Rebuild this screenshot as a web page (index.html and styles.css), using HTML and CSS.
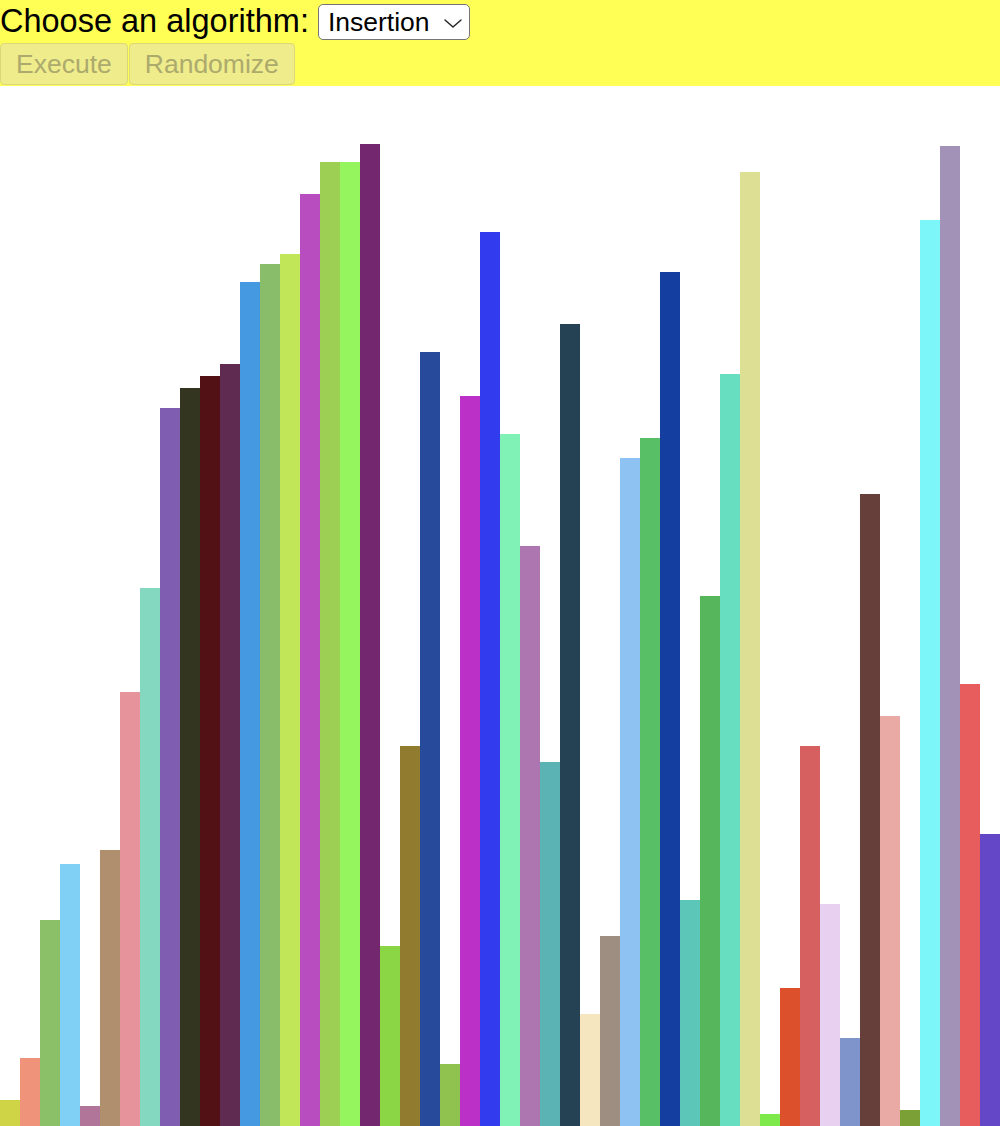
FILE: index.html
```html
<!DOCTYPE html>
<html>
<head>
    <title>Sorting visualizer</title>
    <meta charset="UTF-8"/>
    <link rel="stylesheet" href="styles.css">
</head>
<body>
    <div class="controls">
        <div class="row">
            <label for="algorithm">Choose an algorithm:</label>
            <span class="select-wrap">
                <select id="algorithm">
                    <option>Insertion</option>
                    <option>Bubble</option>
                    <option>Selection</option>
                    <option>Merge</option>
                    <option>Quick</option>
                </select>
                <svg class="chevron" width="18" height="9" viewBox="0 0 18 9">
                    <path d="M1 1 L9 8 L17 1" fill="none" stroke="#222" stroke-width="1.4" stroke-linecap="round" stroke-linejoin="round"/>
                </svg>
            </span>
        </div>
        <div class="row">
            <button id="execute" disabled>Execute</button>
            <button id="randomize" disabled>Randomize</button>
        </div>
    </div>
    <div class="bars">
        <div class="bar" style="height: 26px; background: #cfd447"></div>
        <div class="bar" style="height: 68px; background: #ef947a"></div>
        <div class="bar" style="height: 206px; background: #8bbf68"></div>
        <div class="bar" style="height: 262px; background: #80cff5"></div>
        <div class="bar" style="height: 20px; background: #b07598"></div>
        <div class="bar" style="height: 276px; background: #b08f6f"></div>
        <div class="bar" style="height: 434px; background: #e6939c"></div>
        <div class="bar" style="height: 538px; background: #85d8c0"></div>
        <div class="bar" style="height: 718px; background: #7f5db0"></div>
        <div class="bar" style="height: 738px; background: #333520"></div>
        <div class="bar" style="height: 750px; background: #521215"></div>
        <div class="bar" style="height: 762px; background: #602b50"></div>
        <div class="bar" style="height: 844px; background: #4499e0"></div>
        <div class="bar" style="height: 862px; background: #8abd6a"></div>
        <div class="bar" style="height: 872px; background: #c1e657"></div>
        <div class="bar" style="height: 932px; background: #b84dc0"></div>
        <div class="bar" style="height: 964px; background: #9dcf54"></div>
        <div class="bar" style="height: 964px; background: #94f55f"></div>
        <div class="bar" style="height: 982px; background: #73276e"></div>
        <div class="bar" style="height: 180px; background: #8ad645"></div>
        <div class="bar" style="height: 380px; background: #917b2f"></div>
        <div class="bar" style="height: 774px; background: #284a9a"></div>
        <div class="bar" style="height: 62px; background: #8fc24f"></div>
        <div class="bar" style="height: 730px; background: #bb30c6"></div>
        <div class="bar" style="height: 894px; background: #333bee"></div>
        <div class="bar" style="height: 692px; background: #80f2b6"></div>
        <div class="bar" style="height: 580px; background: #ad76b1"></div>
        <div class="bar" style="height: 364px; background: #5cb3b3"></div>
        <div class="bar" style="height: 802px; background: #254255"></div>
        <div class="bar" style="height: 112px; background: #f5e6c0"></div>
        <div class="bar" style="height: 190px; background: #9e8d81"></div>
        <div class="bar" style="height: 668px; background: #8ec2f3"></div>
        <div class="bar" style="height: 688px; background: #58bf67"></div>
        <div class="bar" style="height: 854px; background: #143fa0"></div>
        <div class="bar" style="height: 226px; background: #5cc6b9"></div>
        <div class="bar" style="height: 530px; background: #55b65c"></div>
        <div class="bar" style="height: 752px; background: #68dec0"></div>
        <div class="bar" style="height: 954px; background: #dcdf94"></div>
        <div class="bar" style="height: 12px; background: #7de94b"></div>
        <div class="bar" style="height: 138px; background: #dc512b"></div>
        <div class="bar" style="height: 380px; background: #d66060"></div>
        <div class="bar" style="height: 222px; background: #e8d0f0"></div>
        <div class="bar" style="height: 88px; background: #7e94ca"></div>
        <div class="bar" style="height: 632px; background: #673f3a"></div>
        <div class="bar" style="height: 410px; background: #e9a9a5"></div>
        <div class="bar" style="height: 16px; background: #7aa036"></div>
        <div class="bar" style="height: 906px; background: #7cf6f8"></div>
        <div class="bar" style="height: 980px; background: #a292b7"></div>
        <div class="bar" style="height: 442px; background: #e75d5e"></div>
        <div class="bar" style="height: 292px; background: #6447c6"></div>
    </div>
</body>
</html>
```

FILE: styles.css
```css
html {
    height: 100%;
}

body {
    margin: 0;
    font-family: "Liberation Sans", Arial, sans-serif;
    overflow: hidden;
}

.controls {
    background-color: #ffff55;
    height: 86px;
}

.row {
    display: flex;
    align-items: center;
}

.row label {
    font-size: 32.5px;
    height: 43px;
    line-height: 43px;
}

.select-wrap {
    position: relative;
    display: inline-block;
    margin-left: 9px;
    height: 36px;
}

.select-wrap select {
    appearance: none;
    -webkit-appearance: none;
    font-family: inherit;
    font-size: 26.5px;
    width: 152px;
    height: 36px;
    padding: 0 0 0 9px;
    border: 1.5px solid #767676;
    border-radius: 5px;
    background: #fff;
    color: #000;
}

.chevron {
    position: absolute;
    right: 8px;
    top: 15px;
    pointer-events: none;
}

.row button {
    font-family: inherit;
    font-size: 26.5px;
    height: 42px;
    padding: 0 15px;
    margin-right: 1px;
    border: 1px solid #dcd878;
    border-radius: 4px;
    background-color: #efec8c;
    color: #acaa6c;
}

.bars {
    display: flex;
    align-items: flex-end;
    height: 1040px;
}

.bar {
    width: 20px;
    flex: none;
}
```
